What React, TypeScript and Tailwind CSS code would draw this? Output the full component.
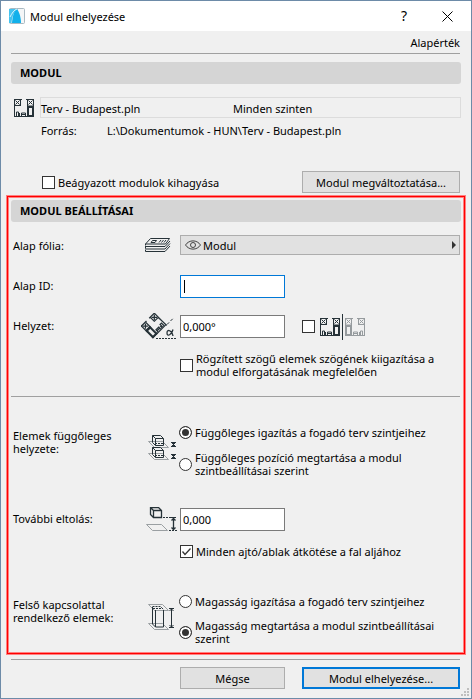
import type { InputHTMLAttributes, ReactNode } from "react";

function PlanShape() {
  return (
    <g fill="none" stroke="currentColor">
      <path d="M0 .5h8M12 .5h8M.5 0v18M0 17.500h20M6.500 1v6M1 6.500h6" />
      <path d="M1.500 1.500l4 4M5.500 1.500l-4 4M14.500 1.500l4 4M18.500 1.500l-4 4" />
      <path d="M2.500 17v-4h2v4M5.500 17v-3M7.500 17v-3h4v3M8 15.500h3" />
      <path d="M13.500 1v6M19.500 0v18M13 7h7" />
      <path d="M14 7v11M19 7v11" strokeWidth="2" />
      <path d="M13 8h7M13 17h7" strokeWidth="2" />
    </g>
  );
}

function ModuleIcon() {
  return (
    <svg width="20" height="18" viewBox="0 0 20 18" className="text-[#263238]">
      <PlanShape />
    </svg>
  );
}

function MirrorIcon() {
  return (
    <svg width="46" height="26" viewBox="0 0 46 26">
      <g transform="translate(0 4)" className="text-[#263238]">
        <PlanShape />
      </g>
      <path d="M22.500 0v26" stroke="#263238" />
      <g transform="translate(45 4) scale(-1 1)" className="text-[#969b9e]">
        <PlanShape />
      </g>
    </svg>
  );
}

function LayersIcon() {
  return (
    <svg width="36" height="18" viewBox="0 0 36 18" fill="none" stroke="#263238">
      <path d="M9.500 2.500h19l-4 5.500H4.500z" />
      <path d="M4.500 8v1.500M4 10.500h20l5-5.500M4.500 10.500v2M4 13h20l5-5.500M4.500 14v1.500H24l5-5.500" />
      <path d="M11.500 4.500h4l-1.500 2h-4zM20 4l-2 2.500M22.500 4l-2 2.500M25 4l-2 2.500" />
    </svg>
  );
}

function AngleIcon() {
  return (
    <svg width="36" height="27" viewBox="0 0 36 27" fill="none" stroke="#263238">
      {/* the plan, swung down onto the dashed base line */}
      <g transform="matrix(-.68 .68 .68 .68 13.300 -.5)" strokeWidth="1.300" className="text-[#263238]">
        <PlanShape />
      </g>
      <path d="M17 4.500l9 8" />
      <path d="M26 11.500l6-6" strokeDasharray="3 2" />
      <path d="M15 25.500h20" strokeDasharray="2 1" />
      <path d="M32 16.500c-1 5-6 8-6 3.500s5-2.500 6 3" strokeWidth="1.300" />
    </svg>
  );
}

function BoxOnPlane({ y }: { y: number }) {
  return (
    <g transform={`translate(0 ${y})`}>
      <path d="M7.500 6.500h14l6 6h-14z" stroke="#9a9fa2" />
      <path d="M11.500 .5h8l3 3v7h-8l-3-3zM11.500 .5l3 3h8M14.500 3.500v7" stroke="#263238" />
      <path d="M14 8.500h8" stroke="#263238" strokeDasharray="2 1" />
      <path d="M30 7.500h5M30 11.500h5M32.500 8v3M31 8.500h3M31 10.500h3" stroke="#263238" />
    </g>
  );
}

function StoriesIcon() {
  return (
    <svg width="36" height="26" viewBox="0 0 36 26" fill="none">
      <BoxOnPlane y={0} />
      <BoxOnPlane y={12} />
    </svg>
  );
}

function OffsetIcon() {
  return (
    <svg width="36" height="25" viewBox="0 0 36 25" fill="none" stroke="#263238">
      <path d="M9.500 .5h8l3 3v7h-8l-3-3zM9.500 .5l3 3h8M12.500 3.500v7" strokeWidth="1.300" />
      <path d="M5.500 17.500h15l6 6h-15z" stroke="#9a9fa2" />
      <path d="M22 10.500h10M28 23.500h8" strokeDasharray="2 1" />
      <path d="M32.500 11v12M30.500 13.500l2-2 2 2M30.500 20.500l2 2 2-2" strokeWidth="1.300" />
      <path d="M30 10.500h5" />
    </svg>
  );
}

function HeightIcon() {
  return (
    <svg width="36" height="27" viewBox="0 0 36 27" fill="none" stroke="#263238">
      <path d="M7.500 .5h14l6 6h-14zM7.500 19.500h14l6 6h-14z" stroke="#9a9fa2" />
      <path d="M11.500 3v17l3 3h8V6M14.500 6v17M22.500 6v17" />
      <path d="M11.500 2.500h8l3 3M12 4.500h10" strokeDasharray="2 1" />
      <path d="M28 4.500h5M28 23.500h5M30.500 5v18M28.500 7l2-2 2 2M28.500 21l2 2 2-2" />
    </svg>
  );
}

function AppLogo() {
  return (
    <svg width="16" height="16" viewBox="0 0 16 16">
      <rect x=".5" y=".5" width="15" height="15" rx="1" fill="#f4f6f7" stroke="#a9b9c2" />
      <path d="M0 1h9C5 3 3 9 2.500 15H0z" fill="#45c3ef" />
      <path d="M3 15C3.500 8 5 3 8 1c2.500 3 4 9 4 14z" fill="#12b0ea" />
      <path d="M1 9C3 5 5 2 8 1" fill="none" stroke="#d8f3fc" />
    </svg>
  );
}

function SectionTitle({ children }: { children: ReactNode }) {
  return (
    <h2 className="h-[22px] rounded-[3px] bg-[#d5d5d5] px-[9px] text-[11px] leading-[22px] font-bold">
      {children}
    </h2>
  );
}

function Checkbox(props: InputHTMLAttributes<HTMLInputElement>) {
  return (
    <span className="grid size-[13px] shrink-0">
      <input
        type="checkbox"
        className="peer col-start-1 row-start-1 size-[13px] appearance-none border border-[#333] bg-white"
        {...props}
      />
      <svg
        viewBox="0 0 13 13"
        className="pointer-events-none invisible col-start-1 row-start-1 size-[13px] peer-checked:visible"
      >
        <path d="M2.500 6.500l2.500 3 5.500-6" fill="none" stroke="#333" strokeWidth="1.300" />
      </svg>
    </span>
  );
}

function Radio(props: InputHTMLAttributes<HTMLInputElement>) {
  return (
    <input
      type="radio"
      className="size-[13px] shrink-0 appearance-none rounded-full border border-[#333] bg-white checked:bg-[#333] checked:shadow-[inset_0_0_0_2px_white]"
      {...props}
    />
  );
}

const row = "grid grid-cols-[128px_39px_1fr] items-center pl-0.5";
const textBox = "h-[23px] w-[105px] border bg-white px-0.5 outline-none";
const button = "h-[22px] border bg-[#e1e1e1] text-center";

export default function App() {
  return (
    <div className="flex min-h-screen flex-col border border-[#6d8ba8] bg-[#f0f0f0] font-['Noto_Sans',sans-serif] text-[11px] leading-[13px] text-black">
      <header className="flex h-[30px] items-center bg-white pr-4 pl-2">
        <AppLogo />
        <h1 className="ml-[5px] flex-1 text-[11px]">Modul elhelyezése</h1>
        <button aria-label="Súgó" className="w-6 text-sm">?</button>
        <button aria-label="Bezárás" className="ml-6">
          <svg width="15" height="15" viewBox="0 0 15 15" stroke="#000">
            <path d="M2.500 2.500l10 10M12.500 2.500l-10 10" />
          </svg>
        </button>
      </header>

      <div className="px-2.5">
        <p className="mr-px h-[23px] border-b border-[#a0a0a0] pt-[5px] text-right">Alapérték</p>
        <div className="pt-2">
          <SectionTitle>MODUL</SectionTitle>
        </div>
        <div className="mt-[13px] flex items-center pl-[3px]">
          <ModuleIcon />
          <div className="ml-1.5 grid h-[21px] flex-1 grid-cols-[192px_1fr] items-center border border-[#dcdcdc] pt-px">
            <span>Terv - Budapest.pln</span>
            <span>Minden szinten</span>
          </div>
        </div>
        <dl className="mt-1.5 flex pl-[30px]">
          <dt className="w-[66px]">Forrás:</dt>
          <dd>L:\Dokumentumok - HUN\Terv - Budapest.pln</dd>
        </dl>
        <div className="mt-[34px] flex items-center justify-between pr-px pl-[31px]">
          <label className="flex items-center gap-[3px]">
            <Checkbox /> Beágyazott modulok kihagyása
          </label>
          <button className={`${button} w-[158px] border-[#adadad]`}>Modul megváltoztatása...</button>
        </div>
      </div>

      <section className="mx-1.5 mt-[3px] border border-[#ff0000] px-[3px] pt-[3px] pb-2 shadow-[0_0_0_1px_#ff8080,inset_0_0_0_1px_#ff8080]">
        <SectionTitle>MODUL BEÁLLÍTÁSAI</SectionTitle>

        <div className={`${row} mt-[13px]`}>
          <label htmlFor="layer">Alap fólia:</label>
          <LayersIcon />
          <div className="relative mr-px">
            <select
              id="layer"
              className="block h-5 w-full appearance-none border border-[#adadad] bg-[#e1e1e1] pl-[22px] leading-[13px]"
            >
              <option>Modul</option>
            </select>
            <svg width="16" height="10" viewBox="0 0 16 10" fill="none" stroke="#444" className="pointer-events-none absolute top-[5px] left-[5px]">
              <path d="M.5 5C4-.5 12-.5 15.500 5 12 10.500 4 10.500.5 5z" />
              <circle cx="8" cy="5" r="2.500" />
            </svg>
            <svg width="4" height="8" viewBox="0 0 4 8" className="pointer-events-none absolute top-1.5 right-1">
              <path d="M0 0l4 4-4 4z" fill="#333" />
            </svg>
          </div>
        </div>

        <div className={`${row} mt-5`}>
          <label htmlFor="id" className="pb-[3px]">Alap ID:</label>
          <span />
          <div className="relative flex">
            <input id="id" className={`${textBox} border-[#0078d7]`} />
            <span className="absolute top-[5px] left-1 h-[13px] w-px bg-black" />
          </div>
        </div>

        <div className={`${row} mt-[15px]`}>
          <label htmlFor="angle" className="pb-[3px]">Helyzet:</label>
          <AngleIcon />
          <div className="flex items-center">
            <input id="angle" defaultValue="0,000°" className={`${textBox} border-[#7a7a7a]`} />
            <label className="ml-[17px] flex items-center gap-[5px]">
              <Checkbox aria-label="Tükrözés" />
              <MirrorIcon />
            </label>
          </div>
        </div>

        <label className="mt-3 ml-[169px] flex items-center gap-[3px]">
          <Checkbox />
          <span>
            Rögzített szögű elemek szögének kiigazítása a
            <br />
            modul elforgatásának megfelelően
          </span>
        </label>

        <hr className="mt-[18px] mr-px border-[#a0a0a0]" />

        <div className={`${row} mt-[29px]`}>
          <p className="self-start pt-[3px]">
            Elemek függőleges
            <br />
            helyzete:
          </p>
          <div className="self-start pt-[9px]">
            <StoriesIcon />
          </div>
          <div className="flex flex-col gap-3">
            <label className="-ml-px flex items-center gap-[3px]">
              <Radio name="vertical" defaultChecked /> Függőleges igazítás a fogadó terv szintjeihez
            </label>
            <label className="-ml-px flex items-center gap-[3px]">
              <Radio name="vertical" />
              <span>
                Függőleges pozíció megtartása a modul
                <br />
                szintbeállításai szerint
              </span>
            </label>
          </div>
        </div>

        <div className={`${row} mt-[30px]`}>
          <label htmlFor="offset" className="pb-[3px]">További eltolás:</label>
          <OffsetIcon />
          <input id="offset" defaultValue="0,000" className={`${textBox} border-[#7a7a7a]`} />
        </div>

        <label className="mt-[13px] ml-[169px] flex items-center gap-[3px]">
          <Checkbox defaultChecked /> Minden ajtó/ablak átkötése a fal aljához
        </label>

        <div className={`${row} mt-[37px]`}>
          <p className="self-start pt-[3px]">
            Felső kapcsolattal
            <br />
            rendelkező elemek:
          </p>
          <div className="self-start pt-[9px]">
            <HeightIcon />
          </div>
          <div className="flex flex-col gap-[11px]">
            <label className="-ml-px flex items-center gap-[3px]">
              <Radio name="height" /> Magasság igazítása a fogadó terv szintjeihez
            </label>
            <label className="-ml-px flex items-center gap-[3px]">
              <Radio name="height" defaultChecked />
              <span>
                Magasság megtartása a modul szintbeállításai
                <br />
                szerint
              </span>
            </label>
          </div>
        </div>
      </section>

      <footer className="relative flex-1 pt-[5px] pr-[11px] pl-2.5">
        <div className="flex justify-end gap-[17px] border-t border-[#a0a0a0] pt-[7px] pb-2">
          <button className={`${button} w-[105px] border-[#adadad]`}>Mégse</button>
          <button className={`${button} w-[158px] border-2 border-[#0078d7]`}>Modul elhelyezése...</button>
        </div>
        <svg width="8" height="8" viewBox="0 0 8 8" fill="#bfbfbf" className="absolute right-0.5 bottom-0.5">
          <path d="M6 0h2v2H6zM3 3h2v2H3zM6 3h2v2H6zM0 6h2v2H0zM3 6h2v2H3zM6 6h2v2H6z" />
        </svg>
      </footer>
    </div>
  );
}
